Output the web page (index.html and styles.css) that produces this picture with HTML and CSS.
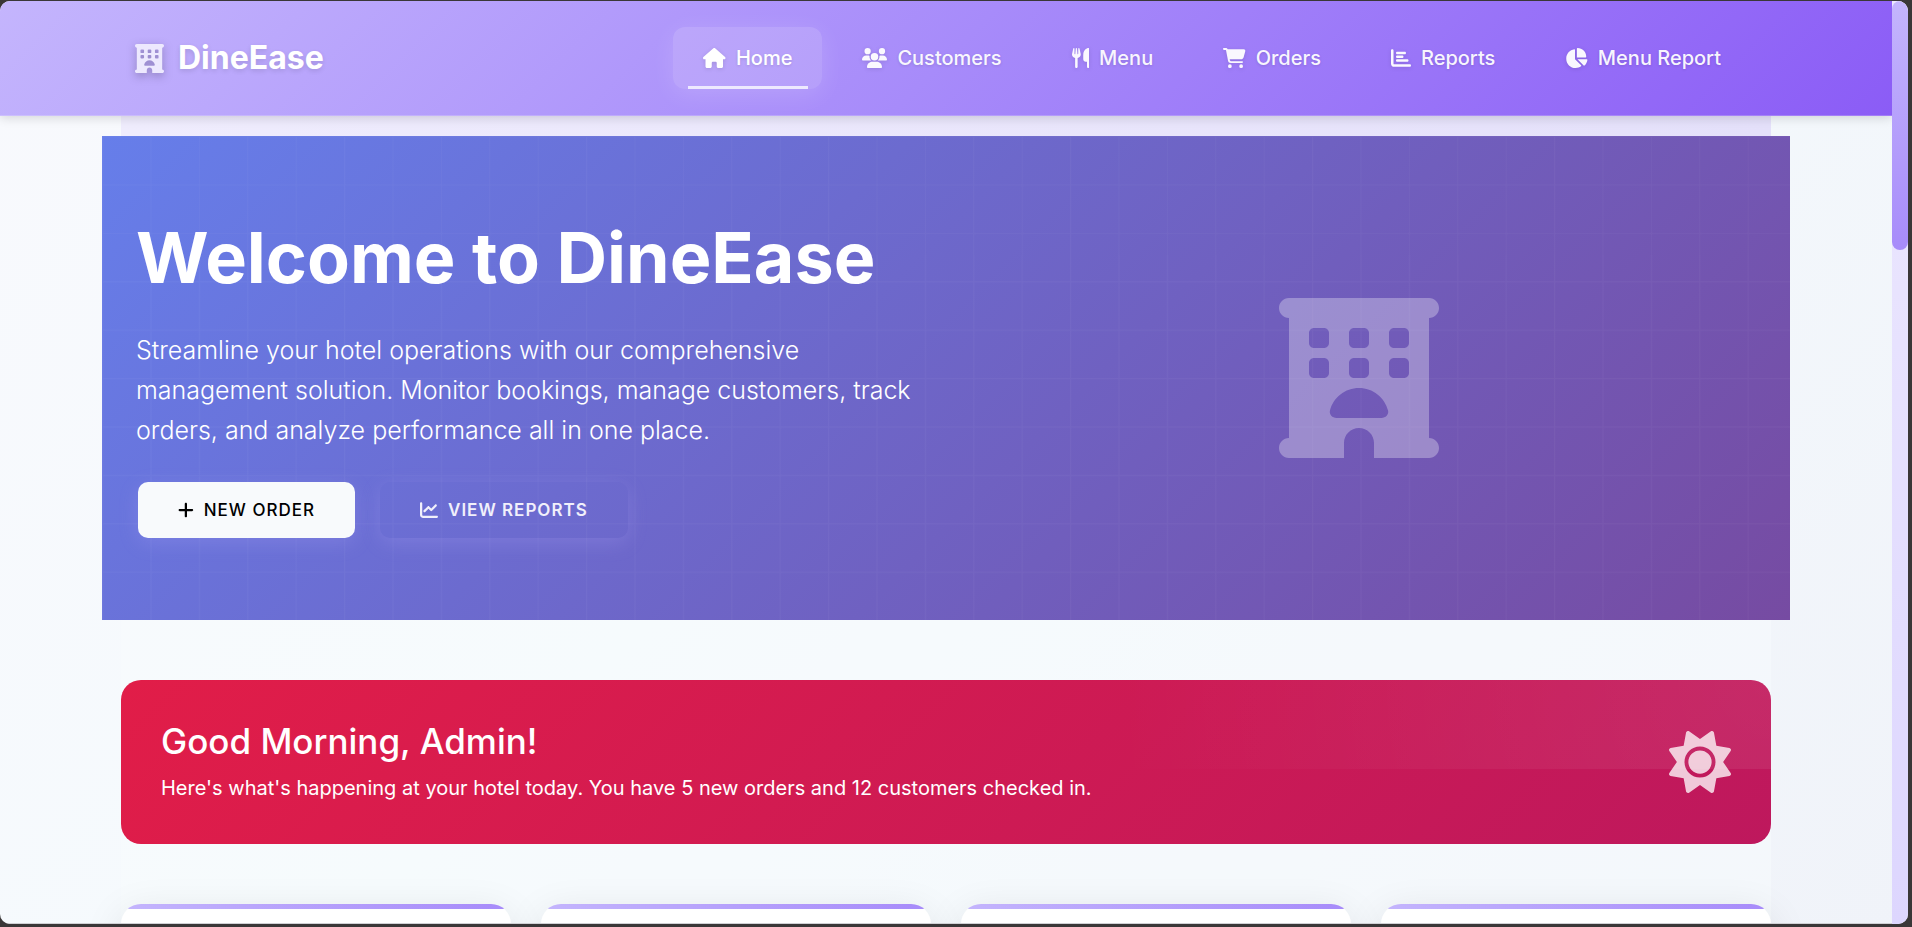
FILE: index.html
```html
<!DOCTYPE html>
<html lang="en">
<head>
<meta charset="utf-8">
<meta name="viewport" content="width=device-width, initial-scale=1">
<title>DineEase</title>
<link rel="stylesheet" href="styles.css">
</head>
<body>
<div class="window">
  <div class="viewport">
    <header class="navbar">
      <div class="container navbar-inner">
        <a class="brand" href="#">
          <svg class="brand-icon" viewBox="0 0 512 512" aria-hidden="true"><use href="#icon-hotel"/></svg>
          <span>DineEase</span>
        </a>
        <nav class="nav" aria-label="Main">
          <a class="nav-link active" href="#" aria-current="page"><svg class="icon" viewBox="0 0 576 512" aria-hidden="true"><path d="M575.8 255.5c0 18-15 32.1-32 32.1l-32 0 .7 160.2c0 2.700-.2 5.400-.5 8.100l0 16.200c0 22.100-17.900 40-40 40l-16 0c-1.100 0-2.200 0-3.300-.1c-1.400 .1-2.800 .1-4.200 .1L416 512l-24 0c-22.100 0-40-17.900-40-40l0-24 0-64c0-17.700-14.300-32-32-32l-64 0c-17.700 0-32 14.300-32 32l0 64 0 24c0 22.100-17.900 40-40 40l-24 0-31.900 0c-1.500 0-3-.1-4.500-.2c-1.200 .1-2.400 .2-3.600 .2l-16 0c-22.100 0-40-17.900-40-40l0-112c0-.9 0-1.900 .1-2.800l0-69.700-32 0c-18 0-32-14-32-32.100c0-9 3-17 10-24L266.400 8c7-7 15-8 22-8s15 2 21 7L564.800 231.500c8 7 12 15 11 24z"/></svg>Home</a>
          <a class="nav-link" href="#"><svg class="icon" viewBox="0 0 640 512" aria-hidden="true"><path d="M144 0a80 80 0 1 1 0 160A80 80 0 1 1 144 0zM512 0a80 80 0 1 1 0 160A80 80 0 1 1 512 0zM0 298.700C0 239.800 47.800 192 106.700 192l42.700 0c15.900 0 31 3.500 44.600 9.700c-1.300 7.200-1.900 14.700-1.900 22.300c0 38.200 16.800 72.500 43.300 96c-.2 0-.4 0-.7 0L21.300 320C9.600 320 0 310.400 0 298.700zM405.300 320c-.2 0-.4 0-.7 0c26.600-23.500 43.300-57.800 43.300-96c0-7.600-.7-15-1.900-22.300c13.600-6.300 28.700-9.700 44.600-9.700l42.700 0C592.200 192 640 239.800 640 298.700c0 11.800-9.600 21.300-21.300 21.300l-213.300 0zM224 224a96 96 0 1 1 192 0 96 96 0 1 1 -192 0zM128 485.300C128 411.700 187.700 352 261.300 352l117.300 0C452.300 352 512 411.700 512 485.300c0 14.700-11.900 26.700-26.700 26.700l-330.700 0c-14.700 0-26.700-11.900-26.700-26.700z"/></svg>Customers</a>
          <a class="nav-link" href="#"><svg class="icon" viewBox="0 0 448 512" aria-hidden="true"><path d="M416 0C400 0 288 32 288 176l0 112c0 35.300 28.700 64 64 64l32 0 0 128c0 17.700 14.300 32 32 32s32-14.300 32-32l0-128 0-112 0-208c0-17.700-14.300-32-32-32zM64 16C64 7.800 57.900 1 49.700 .1S34.200 4.600 32.400 12.500L2.100 148.800C.7 155.100 0 161.500 0 167.900c0 45.900 35.100 83.600 80 87.700L80 480c0 17.700 14.300 32 32 32s32-14.300 32-32l0-224.400c44.900-4.100 80-41.800 80-87.700c0-6.400-.7-12.800-2.100-19.100L191.600 12.500c-1.800-8-9.300-13.300-17.400-12.400S160 7.800 160 16l0 134.200c0 5.400-4.400 9.800-9.800 9.800c-5.100 0-9.300-3.900-9.800-9L127.900 14.600C127.200 6.300 120.300 0 112 0s-15.200 6.300-15.900 14.600L83.700 151c-.5 5.100-4.700 9-9.800 9c-5.400 0-9.800-4.400-9.800-9.800L64 16z"/></svg>Menu</a>
          <a class="nav-link" href="#"><svg class="icon" viewBox="0 0 576 512" aria-hidden="true"><path d="M0 24C0 10.700 10.700 0 24 0L69.500 0c22 0 41.500 12.800 50.600 32l411 0c26.300 0 45.500 25 38.600 50.400l-41 152.300c-8.500 31.400-37 53.300-69.500 53.300l-288.500 0 5.400 28.500c2.200 11.300 12.100 19.500 23.600 19.500L488 336c13.300 0 24 10.700 24 24s-10.700 24-24 24l-288.300 0c-34.600 0-64.300-24.600-70.700-58.500L77.400 54.500c-.7-3.800-4-6.500-7.900-6.500L24 48C10.700 48 0 37.300 0 24zM128 464a48 48 0 1 1 96 0 48 48 0 1 1 -96 0zm336-48a48 48 0 1 1 0 96 48 48 0 1 1 0-96z"/></svg>Orders</a>
          <a class="nav-link" href="#"><svg class="icon" viewBox="0 0 512 512" aria-hidden="true"><path d="M32 32c17.700 0 32 14.300 32 32l0 336c0 8.800 7.200 16 16 16l400 0c17.700 0 32 14.300 32 32s-14.300 32-32 32L80 480c-44.200 0-80-35.800-80-80L0 64C0 46.300 14.300 32 32 32zm96 96c0-17.700 14.300-32 32-32l192 0c17.700 0 32 14.300 32 32s-14.300 32-32 32l-192 0c-17.700 0-32-14.300-32-32zm32 64l128 0c17.700 0 32 14.300 32 32s-14.300 32-32 32l-128 0c-17.700 0-32-14.300-32-32s14.300-32 32-32zm0 96l256 0c17.700 0 32 14.300 32 32s-14.300 32-32 32l-256 0c-17.700 0-32-14.300-32-32s14.300-32 32-32z"/></svg>Reports</a>
          <a class="nav-link" href="#"><svg class="icon" viewBox="0 0 576 512" aria-hidden="true"><path d="M304 240l0-223.400c0-9 7-16.600 16-16.600C443.700 0 544 100.300 544 224c0 9-7.600 16-16.600 16L304 240zM32 272C32 150.700 122.100 50.300 239 34.300c9.200-1.300 17 6.100 17 15.400L256 288 412.500 444.500c6.700 6.700 6.200 17.700-1.500 23.100C371.800 495.600 323.800 512 272 512C139.500 512 32 404.600 32 272zm526.400 16c9.300 0 16.600 7.800 15.400 17c-7.700 55.900-34.600 105.600-73.900 142.300c-6 5.600-15.400 5.200-21.200-.7L320 288l238.400 0z"/></svg>Menu Report</a>
        </nav>
      </div>
    </header>

    <main class="container page">
      <section class="hero">
        <svg class="hero-grid" viewBox="0 0 350 100" preserveAspectRatio="xMinYMin slice" aria-hidden="true">
          <defs><pattern id="grid" width="10" height="10" patternUnits="userSpaceOnUse"><path d="M10 0H0V10" fill="none" stroke="#fff" stroke-opacity=".1" stroke-width=".5"/></pattern></defs>
          <rect width="350" height="100" fill="url(#grid)"/>
        </svg>
        <div class="hero-row">
          <div class="hero-copy">
            <h1 class="hero-title">Welcome to DineEase</h1>
            <p class="hero-lead">Streamline your hotel operations with our comprehensive management solution. Monitor bookings, manage customers, track orders, and analyze performance all in one place.</p>
            <div class="hero-actions">
              <button class="btn btn-light" type="button"><svg class="btn-icon" viewBox="0 0 448 512" aria-hidden="true"><path d="M256 80c0-17.700-14.300-32-32-32s-32 14.300-32 32l0 144L48 224c-17.700 0-32 14.300-32 32s14.300 32 32 32l144 0 0 144c0 17.700 14.300 32 32 32s32-14.300 32-32l0-144 144 0c17.700 0 32-14.300 32-32s-14.300-32-32-32l-144 0 0-144z"/></svg>NEW ORDER</button>
              <button class="btn btn-outline" type="button"><svg class="btn-icon" viewBox="0 0 512 512" aria-hidden="true"><path d="M64 64c0-17.700-14.300-32-32-32S0 46.300 0 64L0 400c0 44.200 35.800 80 80 80l400 0c17.700 0 32-14.300 32-32s-14.300-32-32-32L80 416c-8.800 0-16-7.200-16-16L64 64zm406.600 86.600c12.500-12.500 12.500-32.800 0-45.300s-32.800-12.500-45.300 0L320 210.700l-57.400-57.400c-12.500-12.500-32.800-12.500-45.300 0l-112 112c-12.500 12.500-12.500 32.800 0 45.300s32.800 12.500 45.300 0L240 221.300l57.400 57.400c12.500 12.500 32.800 12.500 45.300 0l128-128z"/></svg>VIEW REPORTS</button>
            </div>
          </div>
          <div class="hero-art">
            <svg class="hero-icon" viewBox="0 0 512 512" aria-hidden="true">
              <path id="icon-hotel" fill-rule="evenodd" d="M0 32C0 14.300 14.300 0 32 0L480 0c17.700 0 32 14.300 32 32s-14.300 32-32 32l0 384c17.700 0 32 14.300 32 32s-14.300 32-32 32l-176 0 0-48c0-26.500-21.500-48-48-48s-48 21.500-48 48l0 48L32 512c-17.700 0-32-14.300-32-32s14.300-32 32-32L32 64C14.300 64 0 49.700 0 32zm96 80l0 32c0 8.800 7.200 16 16 16l32 0c8.800 0 16-7.200 16-16l0-32c0-8.800-7.200-16-16-16l-32 0c-8.800 0-16 7.200-16 16zM240 96c-8.800 0-16 7.200-16 16l0 32c0 8.800 7.200 16 16 16l32 0c8.800 0 16-7.200 16-16l0-32c0-8.800-7.200-16-16-16l-32 0zm112 16l0 32c0 8.800 7.200 16 16 16l32 0c8.800 0 16-7.200 16-16l0-32c0-8.800-7.200-16-16-16l-32 0c-8.800 0-16 7.200-16 16zM112 192c-8.800 0-16 7.200-16 16l0 32c0 8.800 7.200 16 16 16l32 0c8.800 0 16-7.200 16-16l0-32c0-8.800-7.200-16-16-16l-32 0zm112 16l0 32c0 8.800 7.200 16 16 16l32 0c8.800 0 16-7.200 16-16l0-32c0-8.800-7.200-16-16-16l-32 0c-8.800 0-16 7.200-16 16zm144-16c-8.800 0-16 7.200-16 16l0 32c0 8.800 7.200 16 16 16l32 0c8.800 0 16-7.200 16-16l0-32c0-8.800-7.200-16-16-16l-32 0zM328 384c13.300 0 24.300-10.900 21-23.800c-10.600-41.500-48.200-72.200-93-72.200s-82.500 30.700-93 72.200c-3.300 12.800 7.800 23.800 21 23.800l144 0z"/>
            </svg>
          </div>
        </div>
      </section>

      <section class="greeting">
        <div>
          <h2 class="greeting-title">Good Morning, Admin!</h2>
          <p class="greeting-text">Here's what's happening at your hotel today. You have 5 new orders and 12 customers checked in.</p>
        </div>
        <svg class="greeting-icon" viewBox="0 0 512 512" aria-hidden="true"><path fill-rule="evenodd" d="M361.500 1.200c5 2.100 8.600 6.600 9.600 11.900L391 121l107.900 19.800c5.300 1 9.800 4.600 11.900 9.600s1.500 10.700-1.600 15.200L446.900 256l62.300 90.300c3.100 4.500 3.700 10.200 1.600 15.200s-6.600 8.600-11.900 9.600L391 391 371.100 498.900c-1 5.300-4.600 9.800-9.600 11.900s-10.700 1.500-15.200-1.600L256 446.900l-90.300 62.300c-4.500 3.100-10.200 3.700-15.200 1.600s-8.600-6.600-9.600-11.900L121 391 13.100 371.100c-5.300-1-9.800-4.600-11.900-9.600s-1.500-10.700 1.600-15.200L65.100 256 2.800 165.700c-3.100-4.500-3.700-10.200-1.600-15.200s6.600-8.600 11.900-9.600L121 121 140.900 13.100c1-5.300 4.600-9.800 9.600-11.900s10.700-1.500 15.200 1.600L256 65.100 346.300 2.800c4.500-3.100 10.200-3.700 15.200-1.600zM160 256a96 96 0 1 1 192 0 96 96 0 1 1 -192 0zm224 0a128 128 0 1 0 -256 0 128 128 0 1 0 256 0z"/></svg>
      </section>

      <section class="stats">
        <div class="stat-card"></div>
        <div class="stat-card"></div>
        <div class="stat-card"></div>
        <div class="stat-card"></div>
      </section>
    </main>
  </div>
  <div class="scrollbar"><div class="scrollbar-thumb"></div></div>
</div>
</body>
</html>
```

FILE: styles.css
```css
*,
*::before,
*::after {
  box-sizing: border-box;
}

body {
  margin: 0;
  height: 100vh;
  padding: 1px 4px 3px 0;
  overflow: hidden;
  background: #3a3738;
  font-family: Inter, "Liberation Sans", sans-serif;
  font-size: 20px;
  line-height: 32px;
}

h1,
h2,
p {
  margin: 0;
}

svg {
  display: block;
  fill: currentColor;
}

.window {
  display: flex;
  height: 100%;
  border-radius: 10px;
  overflow: hidden;
  background: linear-gradient(135deg, #f8f9fd 0%, #f5fafd 45%, #f0f3f9 100%);
}

.viewport {
  flex: 1;
  min-width: 0;
  overflow: hidden;
  border-bottom: 1px solid #d0d0d4;
}

.scrollbar {
  width: 16px;
  background: linear-gradient(#ede9fe, #ddd6fe);
}

.scrollbar-thumb {
  height: 27%;
  border-radius: 8px;
  background: linear-gradient(#c4b5fd, #a78bfa);
}

.container {
  max-width: 1650px;
  margin: 0 auto;
}

/* Navigation */

.navbar {
  position: relative;
  z-index: 2;
  padding: 26px 0;
  border-bottom: 1px solid rgba(255, 255, 255, 0.2);
  background: linear-gradient(135deg, #c4b5fd 0%, #a78bfa 50%, #8b5cf6 100%) border-box;
  box-shadow: 0 2px 10px rgba(0, 0, 0, 0.14);
}

.navbar-inner {
  display: flex;
  align-items: center;
  justify-content: space-between;
  padding: 0 20px 0 14px;
}

.brand {
  display: flex;
  align-items: center;
  gap: 14px;
  color: #fff;
  font-size: 32px;
  font-weight: 700;
  text-decoration: none;
  text-shadow: 0 2px 5px rgba(0, 0, 0, 0.12);
}

.brand-icon {
  width: 29px;
  height: 29px;
  color: #ede9fe;
  filter: drop-shadow(0 3px 5px rgba(0, 0, 0, 0.25));
}

.nav {
  display: flex;
  gap: 10px;
}

.nav-link {
  position: relative;
  display: flex;
  align-items: center;
  gap: 10px;
  padding: 15px 30px;
  border-radius: 12px;
  color: rgba(255, 255, 255, 0.95);
  font-weight: 500;
  text-decoration: none;
  text-shadow: 0 1px 3px rgba(0, 0, 0, 0.12);
}

.nav-link.active {
  background: rgba(255, 255, 255, 0.15);
  box-shadow: 0 5px 25px rgba(255, 255, 255, 0.15);
  color: #fff;
}

.nav-link.active::after {
  content: "";
  position: absolute;
  left: 10%;
  right: 10%;
  bottom: 0;
  height: 3px;
  background: #ede9fe;
}

.icon {
  height: 20px;
  filter: drop-shadow(0 1px 2px rgba(0, 0, 0, 0.12));
}

/* Page body */

.page {
  height: 100%;
  padding-top: 20px;
  background:
    linear-gradient(90deg, #efecfd, #e4e0fa) 0 0 / 100% 20px no-repeat,
    rgba(248, 251, 253, 0.5);
}

.hero {
  position: relative;
  margin: 0 -19px 60px;
  padding: 80px 19px;
  background: linear-gradient(135deg, #667eea 0%, #764ba2 100%);
  color: #fff;
}

.hero-grid {
  position: absolute;
  inset: 0;
  width: 100%;
  height: 100%;
  opacity: 0.35;
}

.hero-row {
  position: relative;
  display: grid;
  grid-template-columns: 1fr 1fr;
  align-items: center;
}

.hero-copy {
  padding: 0 15px;
}

.hero-title {
  margin-bottom: 30px;
  font-size: 70px;
  font-weight: 700;
  line-height: 84px;
}

.hero-lead {
  margin-bottom: 32px;
  font-size: 25px;
  font-weight: 300;
  line-height: 40px;
}

.hero-actions {
  display: flex;
  gap: 25px;
  padding: 0 2px 2px;
}

.btn {
  display: flex;
  align-items: center;
  gap: 10px;
  height: 56px;
  padding: 0 40px;
  border: 0;
  border-radius: 10px;
  font: 600 17px/28px Inter, "Liberation Sans", sans-serif;
  letter-spacing: 1px;
  box-shadow: 0 5px 20px rgba(196, 181, 253, 0.2);
}

.btn-light {
  background: #f8fafc;
  color: #000;
  font-weight: 500;
}

.btn-outline {
  background: transparent;
  color: #f1f0fb;
}

.btn-icon {
  height: 18px;
}

.hero-art {
  display: flex;
  justify-content: center;
}

.hero-icon {
  width: 160px;
  height: 160px;
  opacity: 0.3;
}

/* Greeting banner */

.greeting {
  position: relative;
  display: flex;
  align-items: center;
  justify-content: space-between;
  margin-bottom: 60px;
  padding: 40px;
  border-radius: 20px;
  overflow: hidden;
  background: linear-gradient(135deg, #e11d48 0%, #be185d 100%);
  color: #fff;
}

.greeting::before {
  content: "";
  position: absolute;
  top: 0;
  right: 0;
  width: 50%;
  height: 54%;
  background: radial-gradient(circle farthest-side at 100% 0, rgba(255, 255, 255, 0.08), transparent 80%);
}

.greeting-title {
  margin-bottom: 10px;
  font-size: 35px;
  font-weight: 500;
  line-height: 42px;
}

.greeting-text {
  font-weight: 400;
}

.greeting-icon {
  position: relative;
  width: 62px;
  height: 62px;
  opacity: 0.77;
}

/* Statistic cards */

.stats {
  display: grid;
  grid-template-columns: repeat(4, 1fr);
  gap: 30px;
}

.stat-card {
  height: 200px;
  border-radius: 20px;
  background:
    linear-gradient(90deg, #c4b5fd, #a78bfa) 0 0 / 100% 5px no-repeat,
    #fff;
  box-shadow: 0 10px 40px rgba(0, 0, 0, 0.1);
}
```
